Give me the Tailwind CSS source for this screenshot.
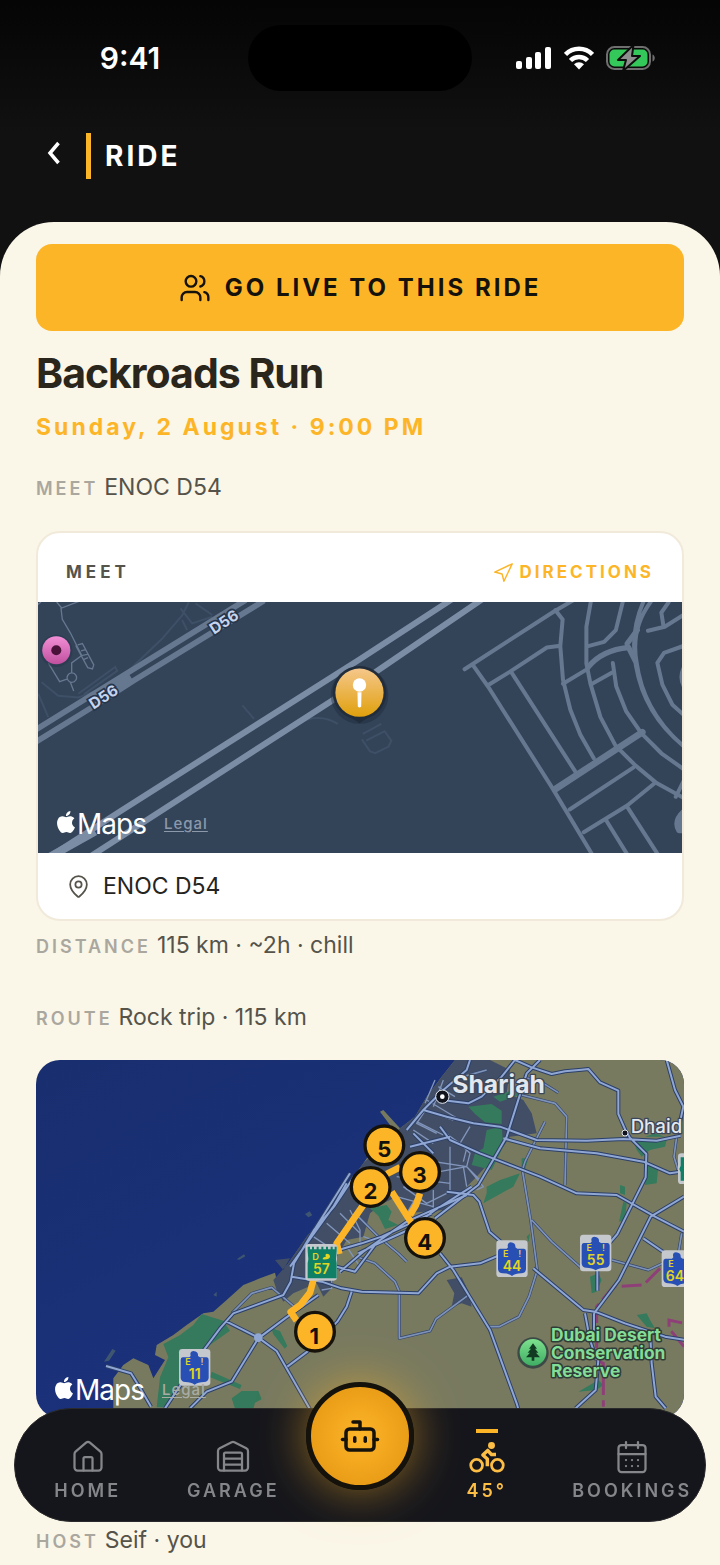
<!DOCTYPE html>
<html lang="en">
<head>
  <meta charset="UTF-8">
  <meta name="viewport" content="width=device-width, initial-scale=1">
  <title>Ride</title>
  <script src="https://cdn.jsdelivr.net/npm/@tailwindcss/browser@4"></script>
</head>
<body class="flex min-h-screen flex-col bg-[#111111] font-['Inter','Liberation_Sans',sans-serif] text-[#55534a]">

  <!-- Status bar + title -->
  <header class="bg-linear-to-b from-[#050505] to-[#111111] to-60% text-white">
    <div class="flex items-center pt-[25px]">
      <div class="flex-1 pr-4 pl-7 text-center text-[30px] leading-9 font-semibold">9:41</div>
      <div class="h-[66px] w-56 rounded-full bg-black"></div>
      <div class="flex flex-1 items-center justify-center gap-3 pr-8 pl-3">
        <svg class="h-6 w-9" viewBox="0 0 36 24" fill="#fff" aria-hidden="true">
          <rect x="0" y="15" width="6" height="8" rx="2" />
          <rect x="10" y="11" width="6" height="12" rx="2" />
          <rect x="19" y="6" width="6" height="17" rx="2" />
          <rect x="29" y="1" width="6" height="22" rx="2" />
        </svg>
        <svg class="h-6 w-[30px]" viewBox="0 0 30 24" fill="none" stroke="#fff" stroke-width="4.500" aria-hidden="true">
          <path d="M1.500 8.500a19 19 0 0 1 27 0" />
          <path d="M6.500 14.500a12 12 0 0 1 17 0" />
          <path d="M15 23.500l-5-5.200a7.300 7.300 0 0 1 10 0z" fill="#fff" stroke="none" />
        </svg>
        <svg class="h-6 w-[50px]" viewBox="0 0 50 24" fill="none" aria-hidden="true">
          <rect x="1" y="1" width="43" height="22" rx="7.500" stroke="#6f6f6f" stroke-width="2" />
          <rect x="3.500" y="3.500" width="38" height="17" rx="5" fill="#34c759" />
          <path d="M46.500 8.500c3 1 3 6 0 7z" fill="#6f6f6f" />
          <path d="M27.500-1L12 14h8l-3 11L34 10h-8z" fill="#8e8e8e" stroke="#0d0d0d" stroke-width="2" stroke-linejoin="round" />
        </svg>
      </div>
    </div>
    <div class="flex items-center gap-3.5 px-9 pt-[42px] pb-[43px]">
      <button type="button" aria-label="Back" class="flex h-9 w-9 items-start justify-center">
        <svg class="h-7 w-5" viewBox="0 0 20 28" fill="none" stroke="#fff" stroke-width="3.500" aria-hidden="true"><path d="M14.500 5L6 15l8.500 10" /></svg>
      </button>
      <h1 class="border-l-[5px] border-[#fdb528] pl-3.5 text-[28px] leading-[46px] font-bold tracking-[3px]">RIDE</h1>
    </div>
  </header>

  <main class="grow rounded-t-[54px] bg-[#faf6e8] px-9 pt-[22px] pb-2">
    <button type="button" class="flex h-[87px] w-full items-center justify-center gap-3.5 rounded-2xl bg-[#fdb528] text-[24px] font-bold tracking-[3px] text-[#15120b]">
      <svg class="size-8" viewBox="0 0 24 24" fill="none" stroke="currentColor" stroke-width="1.800" stroke-linecap="round" stroke-linejoin="round" aria-hidden="true">
        <path d="M16 21v-2a4 4 0 0 0-4-4H6a4 4 0 0 0-4 4v2" /><circle cx="9" cy="7" r="4" /><path d="M22 21v-2a4 4 0 0 0-3-3.870" /><path d="M16 3.130a4 4 0 0 1 0 7.750" />
      </svg>
      GO LIVE TO THIS RIDE
    </button>

    <h2 class="mt-4 text-[41px] leading-[52px] font-bold tracking-[-1px] text-[#2a261c]">Backroads Run</h2>
    <p class="mt-3 text-[23px] leading-8 font-bold tracking-[3px] text-[#fdb528]">Sunday, 2 August · 9:00 PM</p>
    <p class="mt-7 text-[23px] leading-8"><span class="mr-1.5 text-[18px] leading-none font-semibold tracking-[3px] text-[#aaa79f]">MEET</span>ENOC D54</p>

    <!-- Meeting point -->
    <section class="mt-7 overflow-hidden rounded-3xl border-2 border-[#f1eadb] bg-white">
      <div class="flex items-center justify-between px-7 pt-[25px] pb-[15px]">
        <h3 class="text-[17px] leading-[29px] font-bold tracking-[4px]">MEET</h3>
        <a href="#" class="flex items-center gap-1.5 text-[17px] leading-[29px] font-bold tracking-[3px] text-[#fdb528]">
          <svg class="size-[22px]" viewBox="0 0 24 24" fill="none" stroke="currentColor" stroke-width="1.600" stroke-linecap="round" stroke-linejoin="round" aria-hidden="true"><path d="M3 11l19-9-9 19-2-8-8-2z" /></svg>
          DIRECTIONS
        </a>
      </div>
      <div class="relative h-[251px]">
        <svg class="h-full w-full" viewBox="24 246 1935 750" preserveAspectRatio="xMidYMid slice" fill="none" role="img" aria-label="Map of the meeting point">
          <defs>
            <linearGradient id="pin" x1="0" y1="0" x2="0" y2="1"><stop offset="0" stop-color="#f5c78a" /><stop offset="1" stop-color="#e0a00c" /></linearGradient>
            <linearGradient id="poi" x1="0" y1="0" x2="0" y2="1"><stop offset="0" stop-color="#f28fd6" /><stop offset="1" stop-color="#c0509f" /></linearGradient>
          </defs>
          <path fill="#334459" d="M0 200h2000v850H0z" />
          <!-- footpaths -->
          <g stroke="#3e5066" stroke-width="6">
            <path d="M480 246l-20 40-60 70-100 95-70 50-80 30-60-5-50-40M150 520l110-80 6 12-100 70M455 265l35 45 60-20M460 300l15 30M500 250l50 35M640 555l35 40M30 520l30 70M800 610q70-35 125 0" />
            <path d="M1000 640l55-30M1010 660l55-28 20 28-8 18-40 20-16-6-24-36" />
          </g>
          <g stroke="#66788f" stroke-width="4">
            <path d="M24 258l14-12M85 246l15 18 52-20M98 264l4 34 24 40 34 68 20-4M148 374l14-4 34 64-4 12-14-4-36-66M158 392l14-4M165 418l14-6M160 406l-30 22v32M130 458a14 14 0 1 0 1 0M118 476l-24 8-34-56M126 486l10 26" />
          </g>
          <!-- D56 -->
          <g stroke="#66788f">
            <path stroke-width="17" d="M0 642L280 468 650 240" />
            <path stroke-width="17" d="M0 678L200 555 320 478 705 242" />
            <path stroke-width="26" d="M225 515l80-48" />
          </g>
          <!-- main road -->
          <g stroke="#7b8da5" stroke-width="18">
            <path d="M60 1010L280 868 990 418 1275 232" />
            <path d="M180 1010L400 868 990 488 1365 232" />
            <path d="M60 1010l140-78" stroke-width="24" />
          </g>
          <!-- housing -->
          <g transform="translate(990 0)" stroke="#66788f" stroke-width="12" stroke-linecap="round" stroke-linejoin="round">
            <path d="M314 447L580 275 640 240M340 436l45 64 190 300 120 200M385 494l65-40 110-72 40-5M455 458l190 295M585 270l22 28-7 80 8 100 22 90 30 75 40 70" />
            <path d="M692 240l-14 80v110l12 60 30 100 45 85 60 60 60 50 90 50M788 240l-22 90-35 35-45 12M608 490l75-45M695 490l60-33" />
            <path d="M757 428l10 70 30 75 45 65 60 60 70 50M870 246q-60 80-42 180 20 150 145 255M848 246q-40 90-22 190 26 150 150 246" />
            <path d="M684 440q40-50 120-58l20 40M800 370l30-40" stroke-width="16" />
            <path d="M585 805l115-75 145-95" stroke-width="20" />
            <path d="M628 866l190-125M670 934l130-80 80-65M735 895l65 105M800 858l90 140M945 828l25-50" />
            <path d="M862 332l50-12 60-38M908 316l-6-38 22-32M972 376l-62 22-20 30 15 65 30 60 40 36M970 440q-16 30 0 60" />
            <path d="M970 870q-34 30-16 60h20z" fill="#66788f" stroke-width="14" />
          </g>
          <g font-size="46" font-weight="700" fill="#c6d4ee" stroke="#26364b" stroke-width="10" paint-order="stroke" text-anchor="middle">
            <text transform="translate(234 543) rotate(-33)">D56</text>
            <text transform="translate(594 319) rotate(-33)">D56</text>
          </g>
          <circle cx="84" cy="392" r="48" fill="#26364b" opacity=".5" />
          <circle cx="84" cy="390" r="42" fill="url(#poi)" />
          <circle cx="84" cy="390" r="15" fill="#4a1238" />
          <circle cx="990" cy="524" r="86" fill="#1c2836" opacity=".4" />
          <path d="M960 588h60l-30 20z" fill="#222d3c" />
          <circle cx="990" cy="517" r="80" fill="#222d3c" />
          <circle cx="990" cy="517" r="72" fill="url(#pin)" />
          <circle cx="990" cy="494" r="20" fill="#fff" />
          <path d="M984 516h12l-1 42q-5 6-10 0z" fill="#fff" />
        </svg>
        <div class="absolute bottom-[13px] left-[17px] flex items-center text-white">
          <svg class="mb-1 size-[22px]" viewBox="0 0 24 24" fill="currentColor" aria-hidden="true"><path d="M12.152 6.896c-.948 0-2.415-1.078-3.960-1.040-2.040.027-3.910 1.183-4.961 3.014-2.117 3.675-.546 9.103 1.519 12.090 1.013 1.454 2.208 3.090 3.792 3.039 1.520-.065 2.090-.987 3.935-.987 1.831 0 2.350.987 3.960.948 1.637-.026 2.676-1.480 3.676-2.948 1.156-1.688 1.636-3.325 1.662-3.415-.039-.013-3.182-1.221-3.220-4.857-.026-3.040 2.480-4.494 2.597-4.559-1.429-2.090-3.623-2.324-4.390-2.376-2-.156-3.675 1.090-4.610 1.090zM15.530 3.830c.843-1.012 1.400-2.427 1.245-3.830-1.207.052-2.662.805-3.532 1.818-.780.896-1.454 2.338-1.273 3.714 1.338.104 2.715-.688 3.559-1.701" /></svg>
          <span class="text-[28px] leading-8 tracking-[-1px]">Maps</span>
          <a href="#" class="ml-[18px] text-[15px] leading-5 font-medium tracking-[1px] text-[#8c99ab] underline underline-offset-2">Legal</a>
        </div>
      </div>
      <p class="flex items-center gap-3 px-7 py-4 text-[23px] leading-[34px] text-[#26241e]">
        <svg class="size-[25px]" viewBox="0 0 24 24" fill="none" stroke="#55534a" stroke-width="1.700" stroke-linecap="round" stroke-linejoin="round" aria-hidden="true"><path d="M20 10c0 5-5.500 10.200-7.400 11.800a1 1 0 0 1-1.200 0C9.500 20.200 4 15 4 10a8 8 0 0 1 16 0z" /><circle cx="12" cy="10" r="3" /></svg>
        ENOC D54
      </p>
    </section>

    <p class="mt-2 text-[23px] leading-8"><span class="mr-1.5 text-[18px] leading-none font-semibold tracking-[3px] text-[#aaa79f]">DISTANCE</span>115 km · ~2h · chill</p>
    <p class="mt-10 text-[23px] leading-8"><span class="mr-1.5 text-[18px] leading-none font-semibold tracking-[3px] text-[#aaa79f]">ROUTE</span>Rock trip · 115 km</p>

    <!-- Route map -->
    <section class="relative mt-[27px] h-[358px] overflow-hidden rounded-3xl">
      <svg class="h-full w-full" viewBox="18 30 1944 1074" preserveAspectRatio="xMidYMid slice" fill="none" role="img" aria-label="Map of the route">
        <defs>
          <linearGradient id="sea" x1="0" y1="0" x2="1" y2="1"><stop offset="0" stop-color="#182e6e" /><stop offset="1" stop-color="#1d3486" /></linearGradient>
          <linearGradient id="park" x1="0" y1="0" x2="0" y2="1"><stop offset="0" stop-color="#7de08e" /><stop offset="1" stop-color="#3fae63" /></linearGradient>
          <g id="minor">
            <path d="M605 790l60-60 60-18 70 60M985 500l60 60 60 50 25 25 0 0M980 620l55 20 60 55 13 30v140l92-22 18-36 95-70M1475 135l100 25 35 40-5 205M1545 215l-60 120-8 25 25 150 20 150-25 80-30 60-60 30h-35M1505 510l60 65 90 80M1745 630l110 30 107-50M1955 550l-10 60M1940 260l-8 60 15 50" />
            <path d="M1480 80l60 20 45 28M1370 60l-70 20M1780 250l50 40" />
          </g>
          <g id="city">
            <path d="M1200 160l-40 60 60 30M1225 110l50 30M1180 180l90 30M1160 215l80 40M1150 240l60 40M1215 90l-30 70M1240 90l-30 80M1190 150l100 60M1240 245l70 50M1310 295l-10 40M1320 230l-30 50M1300 290l20 20-10 40M1180 330l130 20M1200 370l110-20 40 40M1260 290v140M1300 350l10 60M1100 380l160 20M1120 410l70 50 60-30M1100 440l110 30M1210 420v60M1140 350l60 40M1110 360l20 60M1160 440l-30 50M1310 350l50 60-20 10" />
            <path d="M930 490l60 60M890 520l70 60M850 560l60 40M960 480l30 60v50M1000 560l60 20M905 690v25l-30 5M990 610l-60 60M950 590l40 60M870 620l50 40" />
          </g>
          <g id="major">
            <path d="M405 1075l120-180 45-60 40-45 150-55 22-40 10-55 60-100 60-70 60-90M228 948l75 22 25 40 35 60M590 815l95 48 55 40 100 175M480 1075l50-50 75-30 80-130 80-60 100-70M772 950l60-45 90-90 28-45 15-45M785 680l90 15 60 20 60 10 170 5 55-60 40-20 90-10 60-25M920 650l55 15 60-80 100-45 80-60 110-70M985 610l60-30M925 600l70-20 60-20 150-70M930 665l70-60 130-90 180-80M1230 610l40 50 110 180 80 220 6 20M840 560l120-190M780 650l130-180 40-70" />
            <path d="M1130 240l50-60 60-60 70-60 10-30M1180 180l70 20 80 20 80 10 110 40 150 2 110-5 100 5 72-15M1420 265l110 30 170 15 140 25 80 35 42-6M1230 230l30 40 90 40 180 70 110 50 120 5 115 65 87 45M1455 30l50 22 60 20 40-8 50-5 20-2 35 40 55 25v70l22 50 12 20 50 50-2 70-35 70-50 100-60 70v100M1530 30l-40 40-60 190-35 60-50 85-130 100M1250 425l80 10 18 20 30 90 40 35M1455 30l-40 50-60 60-40 20-80-10M1840 565l80 55M1962 440l-100 60-95 190-75 100M1510 655l150 125 35 5 90 35 120 40 72 12M1665 790l15 80 20 60M1692 790v60M1860 840l5 100 12 100 30 35M1705 930l-8 90-60 55" />
            <path d="M1910 30l25 90 25 50-12 55M1150 250l60 60M1140 290l120-30" />
          </g>
          <g id="eagle">
            <rect x="-47" y="-55" width="94" height="110" rx="10" fill="#c5c8cc" />
            <path fill="#2850b4" d="M-12-34q-4-14 8-15 16 2 14 15l6 4h20q6 0 6 8v54q-2 12-14 12-18 0-28 8-10-8-28-8-12 0-14-12v-54q0-8 6-8h20z" />
          </g>
        </defs>
        <path fill="url(#sea)" d="M0 0h2000v1120H0z" />
        <path fill="#787a60" d="M1275 30L1235 80 1190 140 1155 200 1110 235 1060 180 1050 185 1080 225 1000 340 910 465 830 560 775 640 740 690 735 668 690 685 640 705 590 750 550 785 520 790 470 825 430 855 380 885 375 915 405 930 370 985 355 945 310 925 280 945 250 985 250 1120 2000 1120 2000 30z" />
        <path fill="#424e66" d="M1275 30L1235 80 1190 140 1155 200 1110 235 1000 340 910 465 830 560 775 640 730 690 740 720 760 755 790 730 860 700 880 740 905 715 920 620 950 570 1000 560 1020 490 1060 460 1100 440 1130 490 1240 480 1340 380 1420 290 1440 260 1520 250 1505 190 1480 150 1430 130 1440 60 1380 30zM1250 690l45-8 20 40 10 48-30-10-30 10 8-40zM735 630l45-5-20 35z" />
        <g fill="#357a5c">
          <path d="M515 792l65 20 20 30-70 50-10 90-70 20-45 70h-25l10-90 25-60-15-40 50-27 40-30zM725 835l25 8 22 45-8 8-35-45zM545 965l90 40-5 12-90-35zM605 1045l30-22 50 0 10 25-20 10-5 18h-55z" />
          <path d="M1315 170l70-8 30 20 0 40-50-5-30-25zM1370 240l45-10 5 60-35 70-60-15 10-35 25-15zM1370 410l40-20 60-20-20 40-90 50 10-30zM1475 325l20 0-10 35-10-5zM1390 140l60-20 20 15-60 20zM1020 475l50-10 15 20-10 25 30 15-40 12-20-40zM1490 560l10-10-4 25z" />
          <path d="M1810 270l100 0-5 20-45 10-25 20-15-20zM1850 340l35 10-5 50-35 5zM1770 405l15 5v25l-15-5zM1780 455l10 5-5 50-18 5zM1680 680l25-10 10 20-15 35-15 5zM1820 795l30-5 10 20 15 25-25-5zM1645 1025l60-35 15 15-20 15zM1845 260l30-10 30 10z" />
        </g>
        <path fill="#3f5670" d="M222 935l25-38 10 5-20 30zM620 628l22-15 4 6-18 10zM550 735l10-10v15zM825 492l14-8 8 12-12 6z" />
        <path stroke="#8f3f78" stroke-width="9" stroke-dasharray="60 16" d="M1890 655l-50 50-90 5-50 60v160l20 10v130M1962 890l-45-55 0-25 45 10" />
        <g stroke-linejoin="round">
          <use href="#city" stroke="#8195bb" stroke-width="4" />
          <use href="#minor" stroke="#35486d" stroke-width="9" /><use href="#minor" stroke="#7f93b8" stroke-width="5" />
          <use href="#major" stroke="#2b3f68" stroke-width="12" /><use href="#major" stroke="#90a7d3" stroke-width="6" />
        </g>
        <circle cx="685" cy="863" r="13" fill="#90a7d3" />

        <!-- highway shields -->
        <g font-size="42" font-weight="600" fill="#e2d422" text-anchor="middle">
          <use href="#eagle" x="494" y="952" /><text x="494" y="988">11</text>
          <use href="#eagle" x="1446" y="626" /><text x="1446" y="662">44</text>
          <use href="#eagle" x="1697" y="609" /><text x="1697" y="645">55</text>
          <use href="#eagle" x="1942" y="656" /><text x="1935" y="692">64</text>
          <g font-size="27">
            <text x="474" y="946">E</text><text x="516" y="946">!</text>
            <text x="1427" y="620">E</text><text x="1469" y="620">!</text>
            <text x="1678" y="603">E</text><text x="1720" y="603">!</text>
            <text x="1923" y="650">E</text>
          </g>
        </g>
        <rect x="1944" y="310" width="60" height="92" rx="10" fill="#c5c8cc" />
        <path fill="#0f7f66" d="M1952 322h20v70h-20v-25l-4-10 4-10z" />

        <!-- route -->
        <g stroke="#fdb528" stroke-width="20" stroke-linejoin="round">
          <path d="M800 812l-18-26 30-22 28-36 12-45M928 612l-8-32 80-115M1085 425l60 95M1170 430l-12 35-18 30M1070 372l40-20" />
        </g>
        <rect x="826" y="582" width="95" height="110" rx="10" fill="#c5c8cc" />
        <path fill="#0f7f66" d="M833 602v-12h7v8h6v-8h6v8h8v-8h6v8h8v-8h6v8h8v-8h6v8h8v-8h6v8h6v-8h6v12l-2 26 2 12v45H833v-45l2-12z" />
        <g font-weight="600" fill="#e2d422" text-anchor="middle">
          <text x="857" y="630" font-size="28">D</text><text x="874" y="673" font-size="42">57</text>
          <path d="M878 628q0-8 10-8-4-6 2-9 10 0 10 9-2 10-22 8z" />
        </g>
        <g fill="#fdb528" stroke="#15120b" stroke-width="10">
          <circle cx="855" cy="845" r="58" /><circle cx="1063" cy="286" r="58" /><circle cx="1022" cy="411" r="58" /><circle cx="1170" cy="366" r="58" /><circle cx="1185" cy="564" r="58" />
        </g>
        <g font-size="66" font-weight="700" fill="#15120b" text-anchor="middle">
          <text x="853" y="881">1</text><text x="1063" y="322">5</text><text x="1021" y="447">2</text><text x="1169" y="400">3</text><text x="1184" y="600">4</text>
        </g>

        <!-- places -->
        <circle cx="1237" cy="140" r="13" fill="#fff" stroke="#10131c" stroke-width="12" />
        <circle cx="1237" cy="140" r="20" stroke="#dfe4ea" stroke-width="3" />
        <circle cx="1785" cy="249" r="9" fill="#10131c" stroke="#dfe4ea" stroke-width="3" />
        <g fill="#e3e8ee" stroke="#3b4658" stroke-width="8" paint-order="stroke" stroke-linejoin="round">
          <text x="1267" y="128" font-size="74" font-weight="700">Sharjah</text>
          <text x="1802" y="248" font-size="56" font-weight="500">Dhaid</text>
        </g>
        <circle cx="1509" cy="909" r="47" fill="#3c4a45" />
        <circle cx="1509" cy="907" r="40" fill="url(#park)" />
        <path fill="#123a22" d="M1509 880l12 16h-6l10 12h-7l12 14h-17v10h-8v-10h-17l12-14h-7l10-12h-6z" />
        <g font-size="52" font-weight="700" fill="#84dd96" stroke="#2f3d38" stroke-width="9" paint-order="stroke" stroke-linejoin="round">
          <text x="1563" y="873">Dubai Desert</text><text x="1563" y="927">Conservation</text><text x="1563" y="981">Reserve</text>
        </g>
      </svg>
      <div class="absolute bottom-3 left-[17px] flex items-center text-white">
        <svg class="mb-1 size-[22px]" viewBox="0 0 24 24" fill="currentColor" aria-hidden="true"><path d="M12.152 6.896c-.948 0-2.415-1.078-3.960-1.040-2.040.027-3.910 1.183-4.961 3.014-2.117 3.675-.546 9.103 1.519 12.090 1.013 1.454 2.208 3.090 3.792 3.039 1.520-.065 2.090-.987 3.935-.987 1.831 0 2.350.987 3.960.948 1.637-.026 2.676-1.480 3.676-2.948 1.156-1.688 1.636-3.325 1.662-3.415-.039-.013-3.182-1.221-3.220-4.857-.026-3.040 2.480-4.494 2.597-4.559-1.429-2.090-3.623-2.324-4.390-2.376-2-.156-3.675 1.090-4.610 1.090zM15.530 3.830c.843-1.012 1.400-2.427 1.245-3.830-1.207.052-2.662.805-3.532 1.818-.780.896-1.454 2.338-1.273 3.714 1.338.104 2.715-.688 3.559-1.701" /></svg>
        <span class="text-[28px] leading-8 tracking-[-1px]">Maps</span>
        <a href="#" class="ml-[18px] text-[15px] leading-5 font-medium tracking-[1px] text-[#a9aca4] underline underline-offset-2">Legal</a>
      </div>
    </section>

    <p class="mt-[106px] text-[23px] leading-8"><span class="mr-1.5 text-[18px] leading-none font-semibold tracking-[3px] text-[#aaa79f]">HOST</span>Seif · you</p>
  </main>

  <!-- Tab bar -->
  <nav class="fixed inset-x-3.5 bottom-[43px] flex h-[114px] rounded-full border border-[#2a2a2c] bg-[#15161c] text-[18px] leading-6 font-semibold tracking-[3px] text-[#85868a]">
    <a href="#" class="flex flex-1 flex-col items-center gap-1 pt-[30px]">
      <svg class="size-9" viewBox="0 0 24 24" fill="none" stroke="currentColor" stroke-width="1.500" stroke-linecap="round" stroke-linejoin="round" aria-hidden="true"><path d="M15 21v-8a1 1 0 0 0-1-1h-4a1 1 0 0 0-1 1v8" /><path d="M3 10a2 2 0 0 1 .709-1.528l7-5.999a2 2 0 0 1 2.582 0l7 5.999A2 2 0 0 1 21 10v9a2 2 0 0 1-2 2H5a2 2 0 0 1-2-2z" /></svg>
      HOME
    </a>
    <a href="#" class="flex flex-1 flex-col items-center gap-1 pt-[30px]">
      <svg class="size-9" viewBox="0 0 24 24" fill="none" stroke="currentColor" stroke-width="1.500" stroke-linecap="round" stroke-linejoin="round" aria-hidden="true"><path d="M18 21V10a1 1 0 0 0-1-1H7a1 1 0 0 0-1 1v11" /><path d="M22 19a2 2 0 0 1-2 2H4a2 2 0 0 1-2-2V8a2 2 0 0 1 1.132-1.803l7.950-3.974a2 2 0 0 1 1.837 0l7.948 3.974A2 2 0 0 1 22 8z" /><path d="M6 13h12" /><path d="M6 17h12" /></svg>
      GARAGE
    </a>
    <button type="button" aria-label="Assistant" class="-mt-[27px] flex size-[108px] items-center justify-center rounded-full border-[5px] border-[#15120b] bg-radial from-[#fdb528] to-[#e2930f] text-[#15120b] shadow-[0_0_48px_rgba(253,181,40,0.55)]">
      <svg class="size-[42px]" viewBox="0 0 24 24" fill="none" stroke="currentColor" stroke-width="2" stroke-linecap="round" stroke-linejoin="round" aria-hidden="true"><path d="M12 8V4H8" /><rect width="16" height="12" x="4" y="8" rx="2" /><path d="M2 14h2" /><path d="M20 14h2" /><path d="M15 13v2" /><path d="M9 13v2" /></svg>
    </button>
    <a href="#" aria-current="page" class="relative flex flex-1 flex-col items-center gap-1 pt-[30px] text-[#fdbe45]">
      <span class="absolute top-5 h-1 w-[22px] bg-[#fdb528]"></span>
      <svg class="size-9" viewBox="43 62 104 104" fill="none" stroke="currentColor" aria-hidden="true">
        <circle cx="65" cy="138" r="17" stroke-width="8" /><circle cx="125" cy="138" r="17" stroke-width="8" />
        <circle cx="108" cy="81" r="10" fill="currentColor" stroke="none" />
        <path d="M121 107h-13L97 95 83 108l13 12v21" stroke-width="10" stroke-linejoin="round" />
      </svg>
      45°
    </a>
    <a href="#" class="flex flex-1 flex-col items-center gap-1 pt-[30px]">
      <svg class="size-9" viewBox="0 0 24 24" fill="none" stroke="currentColor" stroke-width="1.500" stroke-linecap="round" stroke-linejoin="round" aria-hidden="true"><path d="M8 2v4" /><path d="M16 2v4" /><rect width="18" height="18" x="3" y="4" rx="2" /><path d="M3 10h18" /><path d="M8 14h.01" /><path d="M12 14h.01" /><path d="M16 14h.01" /><path d="M8 18h.01" /><path d="M12 18h.01" /><path d="M16 18h.01" /></svg>
      BOOKINGS
    </a>
  </nav>
</body>
</html>
